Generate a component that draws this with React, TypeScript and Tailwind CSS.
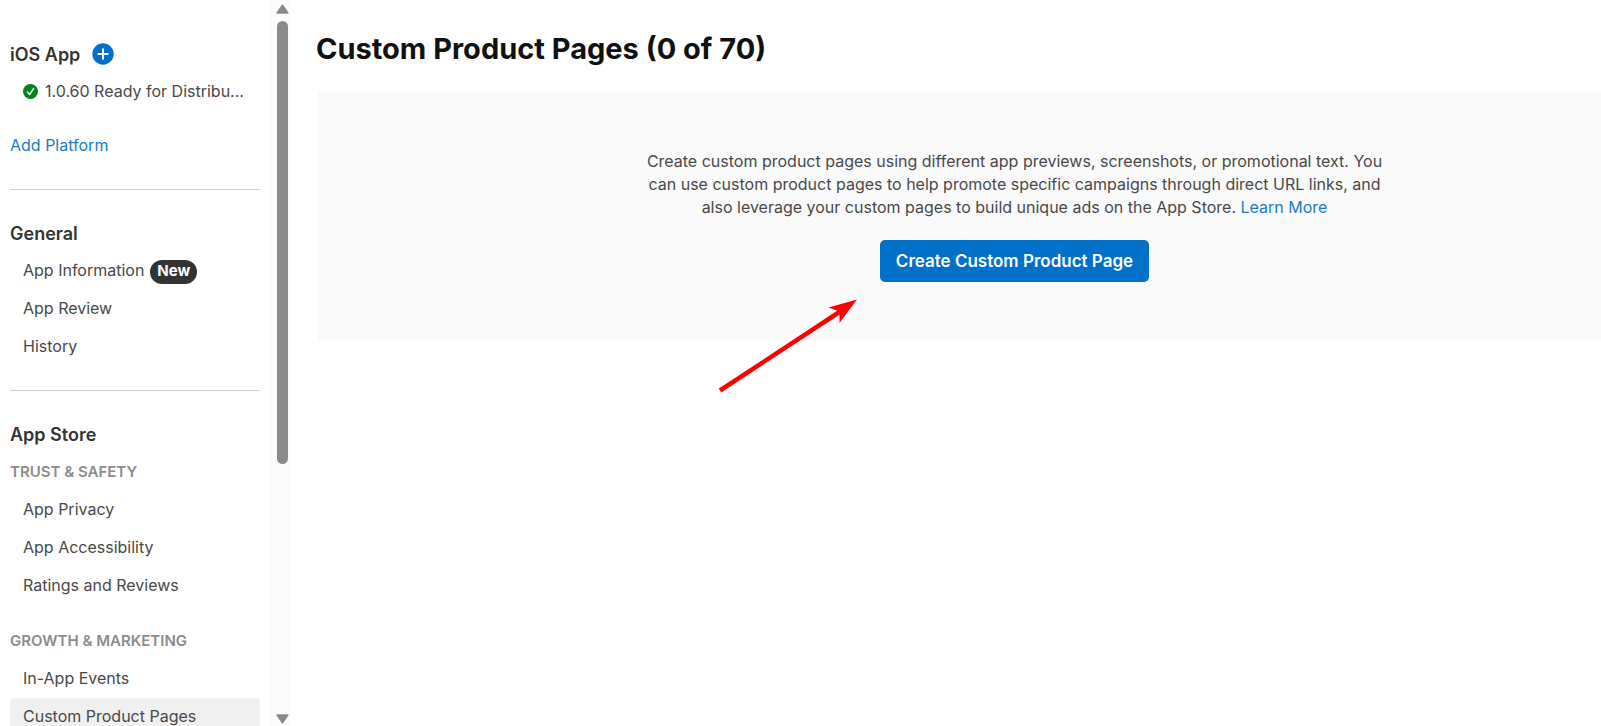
import React from 'react'
import clsx from 'clsx'

interface NavItem {
  label: string
  badge?: string
  active?: boolean
}

const generalItems: NavItem[] = [
  { label: 'App Information', badge: 'New' },
  { label: 'App Review' },
  { label: 'History' }
]

const trustItems: NavItem[] = [
  { label: 'App Privacy' },
  { label: 'App Accessibility' },
  { label: 'Ratings and Reviews' }
]

const growthItems: NavItem[] = [
  { label: 'In-App Events' },
  { label: 'Custom Product Pages', active: true }
]

const NavList: React.FC<{ items: NavItem[] }> = ({ items }) => (
  <ul>
    {items.map((item) => (
      <li key={item.label}>
        <a
          href="#"
          aria-current={item.active ? 'page' : undefined}
          className={clsx(
            'flex h-[38px] items-center rounded px-[13px] pb-0.5 text-[#494949]',
            item.active && 'bg-[#f0f0f0]'
          )}
        >
          {item.label}
          {item.badge && (
            <span className="mt-1 ml-1.5 flex h-6 items-center rounded-full bg-[#333333] px-[7px] pb-0.5 text-[15px] font-bold text-white">
              {item.badge}
            </span>
          )}
        </a>
      </li>
    ))}
  </ul>
)

const SectionTitle: React.FC<{ children: React.ReactNode }> = ({ children }) => (
  <h2 className="flex h-[38px] items-center pt-0.5 text-lg font-semibold text-[#333333]">{children}</h2>
)

const GroupTitle: React.FC<{ children: React.ReactNode }> = ({ children }) => (
  <h3 className="flex h-[38px] items-center text-[15px] font-semibold text-[#8c8c8c] uppercase">{children}</h3>
)

const Sidebar: React.FC = () => (
  <nav className="min-w-0 flex-1 overflow-hidden pt-[35px] pr-2.5 pl-2.5 whitespace-nowrap">
    <div className="flex items-center gap-3">
      <SectionTitle>iOS App</SectionTitle>
      <button type="button" aria-label="Add version">
        <svg className="size-[22px]" viewBox="0 0 22 22">
          <circle cx="11" cy="11" r="10.7" fill="#0070c9" />
          <path d="M11 6.3v9.4M6.3 11h9.4" stroke="#fff" strokeWidth="2" strokeLinecap="round" />
        </svg>
      </button>
    </div>
    <a href="#" className="flex h-[38px] items-center gap-[7px] px-[13px] pb-0.5 text-[#494949]">
      <svg className="size-[15px] shrink-0" viewBox="0 0 15 15">
        <circle cx="7.5" cy="7.5" r="7.5" fill="#03821f" />
        <path
          d="M4.3 7.9l2.3 2.6 4-5.9"
          fill="none"
          stroke="#fff"
          strokeWidth="1.4"
          strokeLinecap="round"
          strokeLinejoin="round"
        />
      </svg>
      <span>1.0.60 Ready for Distribu...</span>
    </a>
    <a href="#" className="mt-4 flex h-[38px] items-center pb-0.5 text-[#1a7bc9]">
      Add Platform
    </a>

    <hr className="my-6 border-[#d2d2d2]" />

    <SectionTitle>General</SectionTitle>
    <NavList items={generalItems} />

    <hr className="my-6 border-[#d2d2d2]" />

    <SectionTitle>App Store</SectionTitle>
    <GroupTitle>Trust &amp; Safety</GroupTitle>
    <NavList items={trustItems} />
    <div className="mt-[17px]">
      <GroupTitle>Growth &amp; Marketing</GroupTitle>
      <NavList items={growthItems} />
    </div>
  </nav>
)

const Scrollbar: React.FC = () => (
  <div className="flex w-5 flex-col items-center bg-[#fcfcfc] pt-1 pb-0.5 pl-[5px]">
    <svg className="h-2.5 w-[13px] shrink-0" viewBox="0 0 13 10">
      <path d="M6.5 1.3L11.8 9H1.2z" fill="#8b8b8b" stroke="#8b8b8b" strokeWidth="1.6" strokeLinejoin="round" />
    </svg>
    <div className="my-[7px] w-[11px] flex-1">
      <div className="h-[64.6%] rounded-full bg-[#8b8b8b]" />
    </div>
    <svg className="h-2.5 w-[13px] shrink-0" viewBox="0 0 13 10">
      <path d="M6.5 8.7L1.2 1h10.6z" fill="#8b8b8b" stroke="#8b8b8b" strokeWidth="1.6" strokeLinejoin="round" />
    </svg>
  </div>
)

const App: React.FC = () => {
  return (
    <div className="flex h-screen overflow-hidden bg-white font-['Inter','Liberation_Sans',sans-serif] text-base">
      <aside className="flex w-[290px] shrink-0">
        <Sidebar />
        <Scrollbar />
      </aside>

      <main className="min-w-0 flex-1 overflow-hidden pt-[29px] pl-[26px]">
        <h1 className="text-[29px] leading-10 font-bold text-[#111111]">Custom Product Pages (0 of 70)</h1>

        {/* panel runs past the right edge of the window */}
        <section className="mt-[23px] mr-[-110px] ml-0.5 flex flex-col items-center bg-[#fafafa] py-[58px]">
          <p className="max-w-[750px] text-center leading-[23px] text-[#494949]">
            Create custom product pages using different app previews, screenshots, or promotional text. You can use
            custom product pages to help promote specific campaigns through direct URL links, and also leverage your
            custom pages to build unique ads on the App Store.{' '}
            <a href="#" className="text-[#1a7bc9]">
              Learn More
            </a>
          </p>
          <div className="relative mt-[21px]">
            <button
              type="button"
              className="h-[42px] rounded-[5px] bg-[#0070c9] px-4 pt-0.5 text-[17px] font-semibold text-white"
            >
              Create Custom Product Page
            </button>
            <svg className="absolute top-[58px] -left-[162px] h-[96px] w-[142px]" viewBox="0 0 142 96">
              <path d="M2 92.5L126 11" stroke="#ff0000" strokeWidth="4.5" />
              <path d="M139 1.5L110.5 9.5L121.5 13.5L121.5 25Z" fill="#ff0000" />
            </svg>
          </div>
        </section>
      </main>
    </div>
  )
}

export default App
